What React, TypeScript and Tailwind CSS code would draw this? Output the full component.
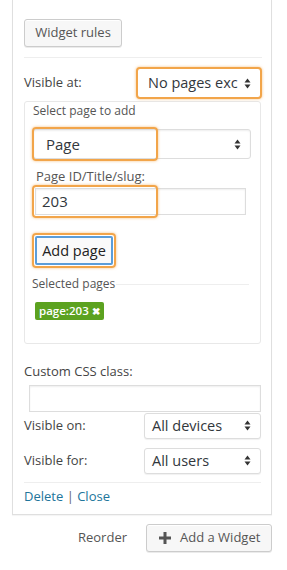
import React from "react";

const font = { fontFamily: '"Open Sans", "Noto Sans", sans-serif' };

function Arrows() {
  return (
    <svg width="7" height="11" viewBox="0 0 7 11" className="shrink-0">
      <path d="M3.5 0.5 L6.5 4.5 L0.5 4.5 Z" fill="#333" />
      <path d="M3.5 10.5 L6.5 6.5 L0.5 6.5 Z" fill="#333" />
    </svg>
  );
}

function FakeSelect({ label, className }: { label: string; className: string }) {
  return (
    <div className={`flex items-center justify-between bg-white pl-[7px] pr-[9px] ${className}`}>
      <span className="mr-[6px] whitespace-nowrap text-[#32373c]">{label}</span>
      <Arrows />
    </div>
  );
}

export default function App() {
  return (
    <div className="w-[287px] h-[570px] bg-white overflow-hidden text-[13px] text-[#444]" style={font}>
      {/* widget body */}
      <div className="ml-[12px] w-[260px] border-x border-b border-[#dfdfdf] shadow-[0_1px_1px_rgba(0,0,0,0.04)] pl-[11px] pr-[9px] pt-[19px] pb-[9px]">
        <button className="h-[28px] w-[98px] rounded-[3px] border border-[#cccccc] bg-[#f7f7f7] text-[13px] text-[#555] shadow-[inset_0_1px_0_#fff,0_1px_0_rgba(0,0,0,0.08)]">
          Widget rules
        </button>

        <div className="mt-[10px] border-t border-[#eeeeee]" />

        <div className="mt-[9px] flex items-center justify-between">
          <span className="text-[13px]">Visible at:</span>
          <FakeSelect
            label="No pages exc"
            className="h-[32px] w-[126px] rounded-[4px] border-2 border-[#f2a54a] shadow-[0_0_3px_rgba(242,165,74,0.7)] text-[14.5px] pl-[10px] pr-[9px]"
          />
        </div>

        {/* select page box */}
        <div className="mt-[2px] mr-[1px] rounded-[3px] border border-[#e8e8e8] pl-[7px] pr-[10px] pt-[1px] pb-[22px]">
          <div className="text-[12px] leading-[16px] text-[#555] ml-[1px]">Select page to add</div>

          <div className="relative mt-[10px] h-[30px]">
            <FakeSelect
              label="Page"
              className="h-[30px] w-[218px] ml-[1px] rounded-[3px] border border-[#dddddd] shadow-[inset_0_1px_2px_rgba(0,0,0,0.07)] text-[15px] pl-[12px]"
            />
            <div className="absolute left-0 top-[-2px] h-[34px] w-[126px] rounded-[4px] border-2 border-[#f2a54a] shadow-[0_0_3px_rgba(242,165,74,0.7)]" />
          </div>

          <div className="mt-[8px] ml-[4px] text-[13px] leading-[18px] text-[#555]">Page ID/Title/slug:</div>

          <div className="relative mt-[3px] h-[27px]">
            <div className="ml-[3px] h-[27px] w-[211px] border border-[#dddddd] bg-white shadow-[inset_0_1px_2px_rgba(0,0,0,0.07)] pl-[6px] text-[15px] leading-[25px] text-[#32373c]">
              203
            </div>
            <div className="absolute left-0 top-[-3px] h-[33px] w-[126px] rounded-[4px] border-2 border-[#f2a54a] shadow-[0_0_3px_rgba(242,165,74,0.7)]" />
          </div>

          <div className="mt-[18px] inline-block rounded-[4px] border-2 border-[#f2a54a] shadow-[0_0_3px_rgba(242,165,74,0.7)] p-px">
            <div className="flex h-[29px] w-[78px] items-center justify-center rounded-[2px] border-2 border-[#5b9dd9] bg-[#fafafa] text-[14.5px] text-[#222]">
              Add page
            </div>
          </div>

          <div className="mt-[8px] flex items-center gap-[1px]">
            <span className="text-[12px] leading-[16px] text-[#555]">Selected pages</span>
            <div className="flex-1 border-t border-[#eeeeee] mr-[1px]" />
          </div>

          <div className="mt-[10px] ml-[3px] inline-flex h-[18px] items-center gap-[3px] rounded-[2px] bg-[#5ca220] px-[4px] text-[11.5px] font-semibold text-white">
            <span>page:203</span>
            <span className="text-[10px] font-bold">✖</span>
          </div>
        </div>

        <div className="mt-[18px] text-[13px] leading-[18px]">Custom CSS class:</div>
        <div className="mt-[5px] ml-[5px] h-[27px] w-[232px] border border-[#dddddd] bg-white shadow-[inset_0_1px_2px_rgba(0,0,0,0.07)]" />

        <div className="mt-[1px] flex items-center justify-between">
          <span className="text-[13px]">Visible on:</span>
          <FakeSelect
            label="All devices"
            className="h-[26px] w-[117px] mr-[1px] rounded-[3px] border border-[#dddddd] shadow-[0_1px_1px_rgba(0,0,0,0.06)] text-[14.5px]"
          />
        </div>

        <div className="mt-[9px] flex items-center justify-between">
          <span className="text-[13px]">Visible for:</span>
          <FakeSelect
            label="All users"
            className="h-[26px] w-[117px] mr-[1px] rounded-[3px] border border-[#dddddd] shadow-[0_1px_1px_rgba(0,0,0,0.06)] text-[14.5px]"
          />
        </div>

        <div className="mt-[8px] border-t border-[#eeeeee] mr-[1px]" />

        <div className="mt-[4px] text-[13px] leading-[18px]">
          <span className="text-[#21759b]">Delete</span>
          <span className="text-[#666]"> | </span>
          <span className="text-[#21759b]">Close</span>
        </div>
      </div>

      {/* footer actions */}
      <div className="mt-[9px] flex items-center justify-end pr-[15px]">
        <span className="mr-[19px] text-[13px] text-[#555]">Reorder</span>
        <button className="flex h-[28px] w-[126px] items-center gap-[8px] rounded-[3px] border border-[#cccccc] bg-[#f7f7f7] pl-[11px] text-[13px] text-[#555] shadow-[inset_0_1px_0_#fff,0_1px_0_rgba(0,0,0,0.08)]">
          <svg width="14" height="14" viewBox="0 0 14 14">
            <path d="M5.5 1 H8.5 V5.5 H13 V8.5 H8.5 V13 H5.5 V8.5 H1 V5.5 H5.5 Z" fill="#555" />
          </svg>
          <span>Add a Widget</span>
        </button>
      </div>
    </div>
  );
}
